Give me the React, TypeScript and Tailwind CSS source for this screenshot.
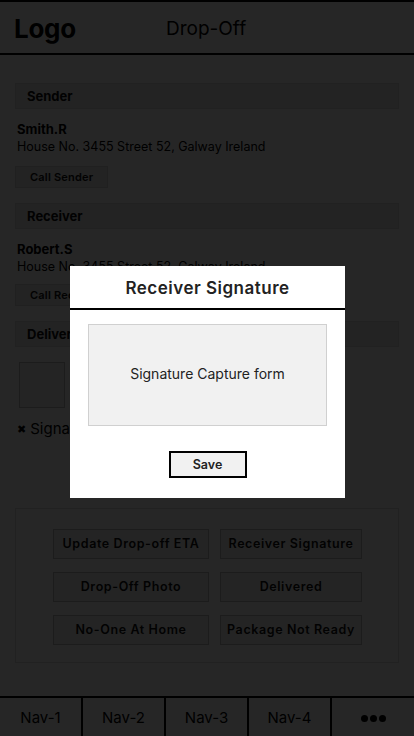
import React from "react";

const font = { fontFamily: "Inter, 'DejaVu Sans', sans-serif" };

function SectionHeader({ children }: { children: React.ReactNode }) {
  return (
    <div className="h-[26px] bg-[#e8e8e8] border border-[#dcdcdc] flex items-center pl-[11px] pt-[1px] text-[13px] font-bold text-[#111]">
      {children}
    </div>
  );
}

function SmallBtn({ children }: { children: React.ReactNode }) {
  return (
    <div className="flex">
      <div className="h-[22px] flex items-center px-[14px] bg-[#e6e6e6] border border-[#d6d6d6] text-[11px] font-semibold text-[#111] tracking-[0.2px]">
        {children}
      </div>
    </div>
  );
}

function ActionBtn({ children, w }: { children: React.ReactNode; w: string }) {
  return (
    <div className={`${w} h-[30px] border border-[#bdbdbd] bg-[#f2f2f2] flex items-center justify-center text-[12.5px] font-semibold text-[#111] tracking-[0.6px]`}>
      {children}
    </div>
  );
}

export default function App() {
  return (
    <div className="relative w-[414px] h-[736px] overflow-hidden bg-white flex flex-col" style={font}>
      <header className="h-[55px] border-t-2 border-b-2 border-black flex items-center pt-[2px] shrink-0">
        <div className="pl-[14px] w-[166px] text-[26px] font-bold text-black tracking-[-0.3px]">Logo</div>
        <div className="text-[19px] text-black pt-[2px]">Drop-Off</div>
      </header>
      <main className="flex-1 px-[15px] pt-[28px]">
        <SectionHeader>Sender</SectionHeader>
        <div className="pl-[2px] pt-[11px]">
          <div className="text-[13px] font-bold leading-[18px] text-black">Smith.R</div>
          <div className="text-[12.5px] leading-[18px] text-black">House No. 3455 Street 52, Galway Ireland</div>
        </div>
        <div className="mt-[10px]">
          <SmallBtn>Call Sender</SmallBtn>
        </div>
        <div className="mt-[15px]">
          <SectionHeader>Receiver</SectionHeader>
        </div>
        <div className="pl-[2px] pt-[11px]">
          <div className="text-[13px] font-bold leading-[18px] text-black">Robert.S</div>
          <div className="text-[12.5px] leading-[18px] text-black">House No. 3455 Street 52, Galway Ireland</div>
        </div>
        <div className="mt-[8px]">
          <SmallBtn>Call Receiver</SmallBtn>
        </div>
        <div className="mt-[15px]">
          <SectionHeader>Delivery</SectionHeader>
        </div>
        <div className="mt-[15px] ml-[4px] w-[46px] h-[46px] border border-[#bbb] bg-[#f2f2f2]" />
        <div className="mt-[11px] pl-[2px] h-[20px] text-[15px] leading-[20px] text-black flex items-center gap-[4px]">
          <span className="text-[11px]">✖</span>
          <span>Signature</span>
        </div>
        <div className="mt-[69px] h-[155px] border border-[#dedede] flex flex-col pt-[20px] pl-[37px] gap-[13px]">
          <div className="flex gap-[11px]">
            <ActionBtn w="w-[156px]">Update Drop-off ETA</ActionBtn>
            <ActionBtn w="w-[142px]">Receiver Signature</ActionBtn>
          </div>
          <div className="flex gap-[11px]">
            <ActionBtn w="w-[156px]">Drop-Off Photo</ActionBtn>
            <ActionBtn w="w-[142px]">Delivered</ActionBtn>
          </div>
          <div className="flex gap-[11px]">
            <ActionBtn w="w-[156px]">No-One At Home</ActionBtn>
            <ActionBtn w="w-[142px]">Package Not Ready</ActionBtn>
          </div>
        </div>
      </main>
      <nav className="h-[40px] border-t-2 border-black flex shrink-0">
        {["Nav-1", "Nav-2", "Nav-3", "Nav-4"].map((n) => (
          <div key={n} className="w-[83px] border-r-2 border-black flex items-center justify-center pt-[2px] text-[15px] text-black">
            {n}
          </div>
        ))}
        <div className="flex-1 flex items-center justify-center gap-[2px] pt-[2px]">
          <span className="w-[7px] h-[7px] rounded-full bg-black" />
          <span className="w-[7px] h-[7px] rounded-full bg-black" />
          <span className="w-[7px] h-[7px] rounded-full bg-black" />
        </div>
      </nav>

      <div className="absolute inset-0 bg-black/85" />

      <div className="absolute left-[70px] top-[266px] w-[275px] h-[232px] bg-white flex flex-col">
        <div className="h-[44px] border-b-2 border-black flex items-center justify-center pt-[3px] text-[17px] font-semibold text-[#222] tracking-[0.5px]">
          Receiver Signature
        </div>
        <div className="mx-[18px] mt-[14px] h-[102px] bg-[#f1f1f1] border border-[#d0d0d0] flex items-center justify-center pb-[3px] text-[14px] text-[#222]">
          Signature Capture form
        </div>
        <div className="flex justify-center mt-[25px]">
          <div className="w-[78px] h-[27px] border-2 border-black bg-[#f1f1f1] flex items-center justify-center pt-[1px] text-[12.5px] font-semibold text-[#222]">
            Save
          </div>
        </div>
      </div>
    </div>
  );
}
